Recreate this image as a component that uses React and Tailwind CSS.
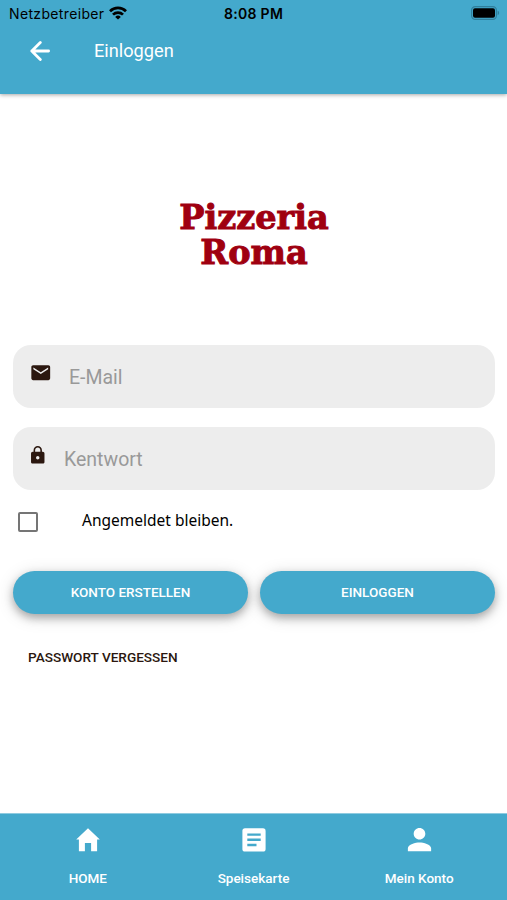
import React from 'react';
import { IoMdMail, IoMdLock, IoMdPerson } from 'react-icons/io';

const HomeIcon = () => (
  <svg className="size-6" viewBox="0 0 24 24" fill="currentColor">
    <path d="M12 0.2 0.2 11.4h2.7V23.3h6V15h6.2v8.3h6V11.4h2.7z" />
  </svg>
);

const MenuIcon = () => (
  <svg className="size-6" viewBox="0 0 24 24">
    <rect x="0.4" y="0.3" width="23.2" height="23.2" rx="2.6" fill="currentColor" />
    <path d="M5.3 6.6h13.4M5.3 11.8h13.4M5.3 17h9.2" stroke="#44a9cc" strokeWidth="2.4" />
  </svg>
);

const PersonIcon = () => <IoMdPerson className="size-[31px] -mx-[3.5px] -mt-[4.5px]" />;

const tabs = [
  { name: 'HOME', icon: HomeIcon },
  { name: 'Speisekarte', icon: MenuIcon },
  { name: 'Mein Konto', icon: PersonIcon },
];

const StatusBar = () => (
  <div className="h-[26px] pl-[9px] pr-[7px] flex items-center justify-between text-black font-[Inter,sans-serif] text-[14px]">
    <div className="flex-1 flex items-center gap-[5px]">
      <span className="tracking-[0.35px]">Netzbetreiber</span>
      <svg className="w-[18px] h-[14px]" viewBox="0 0 18 14" fill="none" stroke="currentColor" strokeWidth="2.7">
        <path d="M1 5.2a11.3 11.3 0 0 1 16 0" />
        <path d="M4 8.6a7.1 7.1 0 0 1 10 0" />
        <path d="M9 13.6 6.2 10.9a4 4 0 0 1 5.6 0z" fill="currentColor" stroke="none" />
      </svg>
    </div>
    <span className="-ml-[2px] font-semibold tracking-[0.3px]">8:08 PM</span>
    <div className="flex-1 flex justify-end">
      <svg className="w-[29px] h-[14px]" viewBox="0 0 29 14">
        <rect x="0.6" y="0.6" width="24.8" height="12.8" rx="3.6" fill="none" stroke="#2f7f9c" strokeWidth="1.2" />
        <rect x="2" y="2.2" width="22" height="9.6" rx="2" fill="#000" />
        <path d="M26.6 4.8c2 .6 2 3.8 0 4.4z" fill="#2f7f9c" />
      </svg>
    </div>
  </div>
);

const Field = ({ icon: Icon, label, iconClass, labelClass }) => (
  <div className="h-[63px] rounded-[18px] bg-[#ededed] flex items-center">
    <Icon className={`${iconClass} size-[21.5px] -mt-[8px] shrink-0 text-[#2b170f]`} />
    <span className={`${labelClass} mt-[2px] text-[19.5px] text-[#999999]`}>{label}</span>
  </div>
);

const Button = ({ children }) => (
  <button className="flex-1 h-[43px] rounded-full bg-[#44a9cc] text-white text-[13.5px] font-medium shadow-[0_4px_8px_rgba(0,0,0,0.28),0_3px_18px_rgba(0,0,0,0.14)]">
    {children}
  </button>
);

const App = () => {
  return (
    <div className="h-[900px] w-full flex flex-col bg-white overflow-hidden font-[Roboto,sans-serif]">
      <header className="h-[94px] shrink-0 bg-[#44a9cc] shadow-[0_1px_4px_rgba(0,0,0,0.35)]">
        <StatusBar />
        <div className="h-[50px] flex items-center pl-[30px] text-white">
          <svg className="w-5 h-5" viewBox="0 0 20 20" fill="none" stroke="currentColor" strokeWidth="2.8" strokeLinecap="round" strokeLinejoin="round">
            <path d="M10.3 1.6 1.8 10l8.5 8.4M1.8 10h16.8" />
          </svg>
          <h1 className="ml-[44px] -mt-px text-[18.2px]">Einloggen</h1>
        </div>
      </header>

      <main className="flex-1 pl-[13px] pr-[12px]">
        {/* Logo */}
        <div className="pt-[106px] flex justify-center">
          <p className="text-center text-[#9f0010] font-['DejaVu_Serif',serif] font-bold text-[33.5px] leading-[35px] [-webkit-text-stroke:1px_#9f0010]">
            Pizzeria
            <br />
            Roma
          </p>
        </div>

        <div className="mt-[75px] flex flex-col gap-[19px]">
          <Field icon={IoMdMail} label="E-Mail" iconClass="ml-[16.5px]" labelClass="ml-[18px]" />
          <Field icon={IoMdLock} label="Kentwort" iconClass="ml-[14px]" labelClass="ml-[15.5px]" />
        </div>

        <div className="mt-[22px] h-5 flex items-center pl-[5px]">
          <span className="size-[20px] rounded-[2px] border-2 border-[#757575]" />
          <span className="ml-[44px] -mt-[3px] font-['Noto_Sans',sans-serif] text-[15.5px] text-black">Angemeldet bleiben.</span>
        </div>

        <div className="mt-[39px] flex gap-[12px]">
          <Button>KONTO ERSTELLEN</Button>
          <Button>EINLOGGEN</Button>
        </div>

        <button className="mt-[33px] ml-[15px] text-[13.6px] font-medium text-[#2b170f]">PASSWORT VERGESSEN</button>
      </main>

      <nav className="h-[87px] shrink-0 bg-[#44a9cc] border-t border-[#8fcbe0] px-[5px] flex text-white">
        {tabs.map(({ name, icon: Icon }) => (
          <a key={name} className="flex-1 flex flex-col items-center pt-[14px]">
            <Icon />
            <span className="mt-auto mb-[12px] text-[13.5px] leading-5 font-medium">{name}</span>
          </a>
        ))}
      </nav>
    </div>
  );
};

export default App;
